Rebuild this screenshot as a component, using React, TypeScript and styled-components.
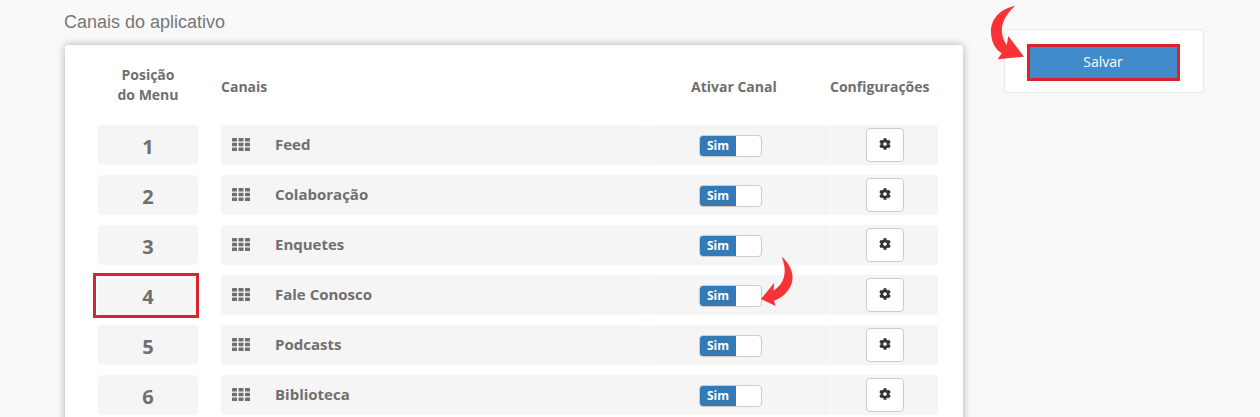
import React from 'react'
import styled, { createGlobalStyle } from 'styled-components'
import { FaCog } from 'react-icons/fa'

const GlobalStyle = createGlobalStyle`
  html, body {
    margin: 0;
    background: #f9f9f9;
  }
  body {
    font-family: "Open Sans", "Liberation Sans", sans-serif;
    overflow: hidden;
  }
`

const Page = styled.div`
  position: relative;
  display: flex;
  align-items: flex-start;
  height: 417px;
  padding-left: 64px;
  overflow: hidden;
  background: #f9f9f9;
`

const Main = styled.div`
  width: 900px;
  flex: none;
`

const Title = styled.h2`
  margin: 12px 0 13px;
  font-family: "Liberation Sans", Arial, sans-serif;
  font-size: 18px;
  line-height: 20px;
  font-weight: 400;
  color: #777;
`

const Card = styled.section`
  margin-left: 1px;
  width: 898px;
  height: 420px;
  padding: 20px 25px 0 33px;
  box-sizing: border-box;
  background: #fff;
  border-radius: 3px;
  box-shadow: 0 0 9px rgba(0, 0, 0, 0.3);
`

const Head = styled.div`
  display: flex;
  align-items: center;
  height: 40px;
  margin-bottom: 20px;
  font-size: 14px;
  line-height: 20px;
  font-weight: 700;
  color: #6f6f6f;
`

const HeadPosition = styled.div`
  width: 100px;
  margin-right: 23px;
  text-align: center;
`

const HeadLabel = styled.div`
  padding-top: 4px;
  white-space: nowrap;
`

const HeadChannel = styled(HeadLabel)`
  width: 470px;
`

const HeadToggle = styled(HeadLabel)`
  width: 85px;
  text-align: center;
`

const HeadConfig = styled(HeadLabel)`
  margin-left: 54px;
`

const Rows = styled.div`
  display: flex;
  flex-direction: column;
  gap: 10px;
`

const Row = styled.div`
  display: flex;
  height: 40px;
`

const Cell = styled.div`
  display: flex;
  align-items: center;
  background: #f5f5f5;
  border-radius: 4px;
`

const PositionCell = styled(Cell)<{ $marked?: boolean }>`
  position: relative;
  justify-content: center;
  width: 100px;
  margin-right: 23px;
  padding-top: 3px;
  box-sizing: border-box;
  font-size: 20px;
  font-weight: 700;
  color: #6f6f6f;

  ${(p) =>
    p.$marked &&
    `
    &::after {
      content: '';
      position: absolute;
      top: -2px;
      left: -5px;
      right: -1px;
      bottom: -3px;
      border: 3px solid #d9232e;
    }
  `}
`

const RowBody = styled.div`
  display: flex;
  gap: 2px;
  background: #f8f8f8;
  border-radius: 4px;
`

const ChannelCell = styled(Cell)`
  width: 426px;
  padding-left: 11px;
  box-sizing: border-box;
  gap: 25px;
  font-size: 15px;
  font-weight: 700;
  color: #6f6f6f;
`

const GripIcon = styled.svg`
  width: 18px;
  height: 13px;
  margin-top: -1px;
  fill: #6f6f6f;
`

const ChannelName = styled.span`
  margin-top: -2px;
`

const ToggleCell = styled(Cell)`
  width: 180px;
  padding-left: 50px;
  box-sizing: border-box;
`

const Toggle = styled.div`
  display: flex;
  width: 63px;
  height: 22px;
  margin-top: 1px;
  box-sizing: border-box;
  background: #fff;
  border: 1px solid #ccc;
  border-radius: 4px;
  overflow: hidden;
`

const ToggleOn = styled.span`
  display: flex;
  align-items: center;
  justify-content: center;
  width: 36px;
  background: #337ab7;
  color: #fff;
  font-size: 12px;
  font-weight: 700;
`

const ConfigCell = styled(Cell)`
  justify-content: center;
  width: 107px;
`

const ConfigButton = styled.button`
  display: flex;
  align-items: center;
  justify-content: center;
  width: 38px;
  height: 34px;
  padding: 0 0 2px;
  background: #fff;
  border: 1px solid #ccc;
  border-radius: 4px;
  color: #333;
  font-size: 12px;
`

const SidePanel = styled.aside`
  display: flex;
  justify-content: center;
  width: 200px;
  height: 64px;
  margin: 29px 0 0 40px;
  padding: 14px 2px 0 0;
  box-sizing: border-box;
  flex: none;
  background: #fff;
  border: 1px solid #e8e8e8;
  border-radius: 3px;
`

const SaveButton = styled.button`
  width: 153px;
  height: 37px;
  padding: 0 0 2px;
  background: #428bca;
  border: 3px solid #d9232e;
  color: #fff;
  font-family: "Open Sans", sans-serif;
  font-size: 14px;
`

const Arrow = styled.svg<{ $left: number; $top: number; $w: number; $h: number }>`
  position: absolute;
  left: ${(p) => p.$left}px;
  top: ${(p) => p.$top}px;
  width: ${(p) => p.$w}px;
  height: ${(p) => p.$h}px;
  fill: #f83236;
`

const channels = ['Feed', 'Colaboração', 'Enquetes', 'Fale Conosco', 'Podcasts', 'Biblioteca']

function Grip(): JSX.Element {
  const cells = []
  for (let y = 0; y < 3; y++) {
    for (let x = 0; x < 3; x++) {
      cells.push(<rect key={`${x}-${y}`} x={x * 6.5} y={y * 4.75} width="5" height="3.5" rx="0.6" />)
    }
  }
  return <GripIcon viewBox="0 0 18 13">{cells}</GripIcon>
}

const App: React.FC = () => {
  return (
    <Page>
      <GlobalStyle />
      <Main>
        <Title>Canais do aplicativo</Title>
        <Card>
          <Head>
            <HeadPosition>
              Posição
              <br />
              do Menu
            </HeadPosition>
            <HeadChannel>Canais</HeadChannel>
            <HeadToggle>Ativar Canal</HeadToggle>
            <HeadConfig>Configurações</HeadConfig>
          </Head>
          <Rows>
            {channels.map((name, i) => (
              <Row key={name}>
                <PositionCell $marked={i === 3}>{i + 1}</PositionCell>
                <RowBody>
                  <ChannelCell>
                    <Grip />
                    <ChannelName>{name}</ChannelName>
                  </ChannelCell>
                  <ToggleCell>
                    <Toggle>
                      <ToggleOn>Sim</ToggleOn>
                    </Toggle>
                  </ToggleCell>
                  <ConfigCell>
                    <ConfigButton>
                      <FaCog />
                    </ConfigButton>
                  </ConfigCell>
                </RowBody>
              </Row>
            ))}
          </Rows>
        </Card>
      </Main>
      <SidePanel>
        <SaveButton>Salvar</SaveButton>
      </SidePanel>
      <Arrow $left={990} $top={5} $w={36} $h={56} viewBox="90 15 108 168">
        <path d="M165 18 C125 25 90 55 93 100 C95 130 108 150 125 160 L113 178 L192 170 L145 108 L140 135 C122 110 112 65 165 18 Z" />
      </Arrow>
      <Arrow $left={760} $top={255} $w={36.67} $h={51.67} viewBox="240 15 110 155">
        <path d="M305 20 C335 45 350 85 325 120 C312 138 295 148 282 152 L287 168 L243 147 L283 98 L280 122 C310 105 325 70 305 20 Z" />
      </Arrow>
    </Page>
  )
}

export default App
